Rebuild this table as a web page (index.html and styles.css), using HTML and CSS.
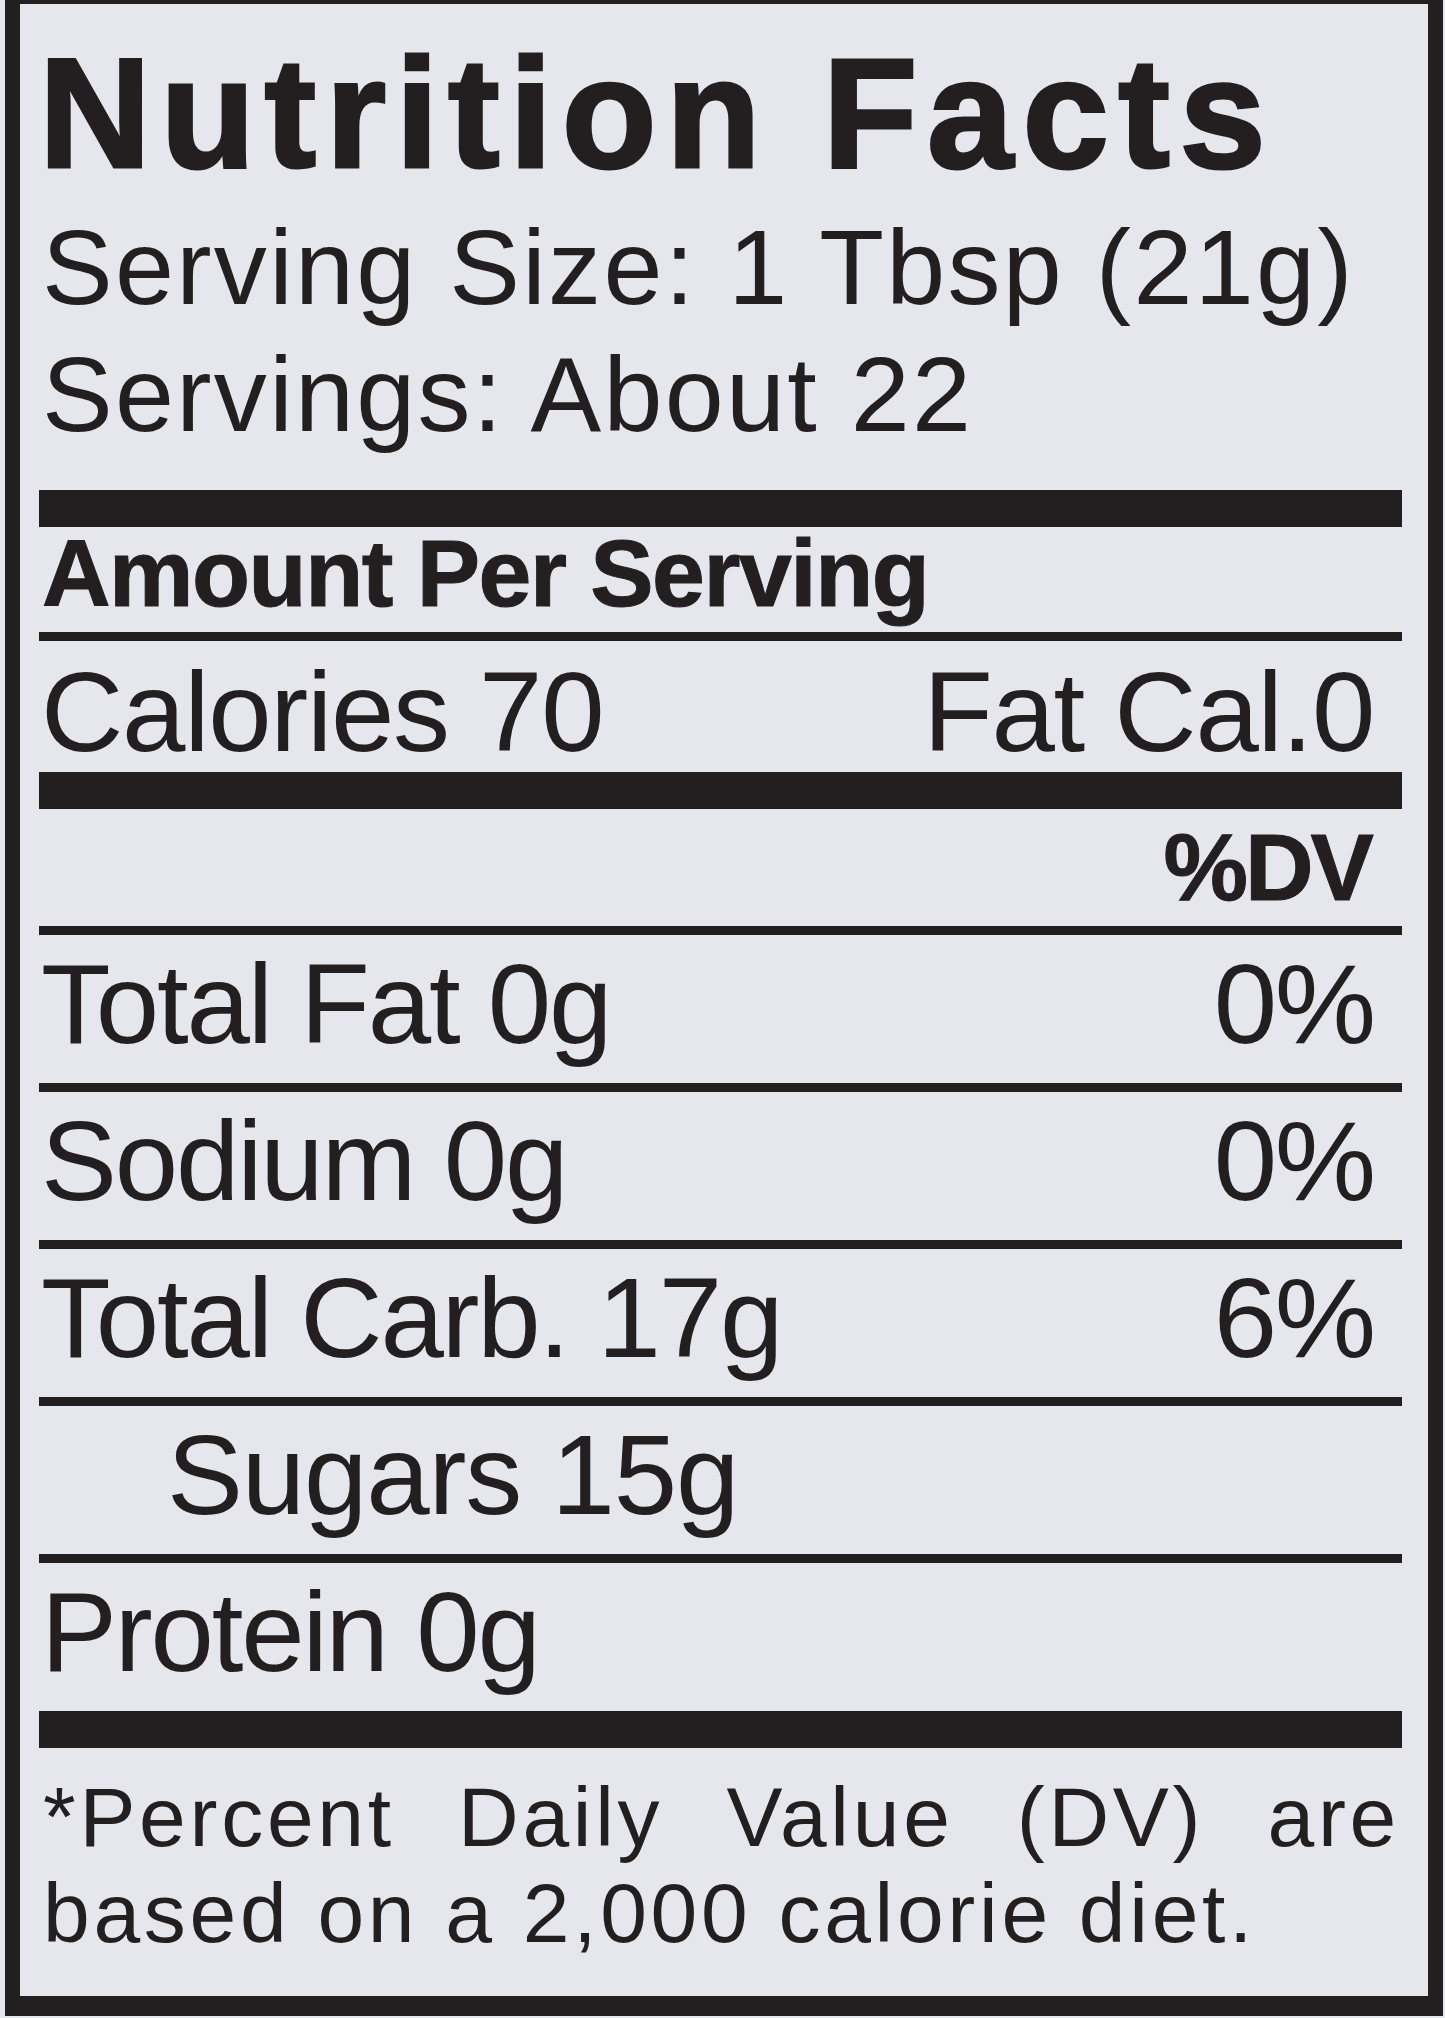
FILE: index.html
```html
<!DOCTYPE html>
<html lang="en">
<head>
<meta charset="utf-8">
<title>Nutrition Facts</title>
<link rel="stylesheet" href="styles.css">
</head>
<body>
<div class="label">
  <h1 class="title">Nutrition Facts</h1>
  <p class="serving">Serving Size: 1 Tbsp (21g)</p>
  <p class="serving">Servings: About 22</p>
  <div class="bar bar-thick bar-first"></div>
  <p class="amount">Amount Per Serving</p>
  <div class="bar bar-thin"></div>
  <div class="row row-cal"><span>Calories 70</span><span>Fat Cal.0</span></div>
  <div class="bar bar-thick"></div>
  <div class="dv-head">%DV</div>
  <div class="bar bar-thin"></div>
  <div class="row"><span>Total Fat 0g</span><span>0%</span></div>
  <div class="bar bar-thin"></div>
  <div class="row"><span>Sodium 0g</span><span>0%</span></div>
  <div class="bar bar-thin"></div>
  <div class="row"><span>Total Carb. 17g</span><span>6%</span></div>
  <div class="bar bar-thin"></div>
  <div class="row row-sub"><span>Sugars 15g</span></div>
  <div class="bar bar-thin"></div>
  <div class="row"><span>Protein 0g</span></div>
  <div class="bar bar-thick"></div>
  <div class="foot">
    <div class="foot-line foot-just">*Percent Daily Value (DV) are</div>
    <div class="foot-line">based on a 2,000 calorie diet.</div>
  </div>
</div>
</body>
</html>
```

FILE: styles.css
```css
html, body {
  margin: 0;
  padding: 0;
  background: #e5e7ed;
}

body {
  width: 1445px;
  height: 2018px;
  overflow: hidden;
  font-family: "Liberation Sans", Arial, Helvetica, sans-serif;
  color: #231f20;
}

.label {
  box-sizing: content-box;
  margin-left: 5px;
  width: 1363px;
  height: 1992px;
  padding: 0 26px 0 19px;
  border-left: 15px solid #231f20;
  border-right: 15px solid #231f20;
  border-top: 4px solid #231f20;
  border-bottom: 20px solid #231f20;
  background: #e5e7ed;
  overflow: hidden;
}

.title {
  margin: 0;
  padding-top: 20px;
  font-size: 155px;
  line-height: 180px;
  font-weight: 700;
  letter-spacing: 9.5px;
  -webkit-text-stroke: 3px #231f20;
  white-space: nowrap;
}

.serving {
  margin: 0;
  padding-left: 3px;
  font-size: 106px;
  line-height: 127px;
  letter-spacing: 2.3px;
  white-space: nowrap;
}

.bar {
  background: #231f20;
}

.bar-thick {
  height: 37px;
}

.bar-first {
  margin-top: 32px;
}

.bar-thin {
  height: 9px;
}

.amount {
  margin: 0;
  padding: 0 0 13px 3px;
  font-size: 95px;
  line-height: 92px;
  font-weight: 700;
  letter-spacing: -1.5px;
  -webkit-text-stroke: 1px #231f20;
  white-space: nowrap;
}

.row {
  display: flex;
  justify-content: space-between;
  padding: 0 28px 10px 2px;
  font-size: 114px;
  line-height: 138px;
  letter-spacing: -2.2px;
  white-space: nowrap;
}

.row-cal {
  padding-top: 11px;
  padding-bottom: 0;
  line-height: 120px;
  letter-spacing: -1.3px;
}

.row-sub {
  padding-left: 128px;
  letter-spacing: -1.2px;
}

.dv-head {
  padding-right: 31px;
  text-align: right;
  font-size: 95px;
  line-height: 117px;
  font-weight: 700;
  letter-spacing: -3px;
  -webkit-text-stroke: 1px #231f20;
}

.foot {
  padding: 21px 2px 0 4px;
  font-size: 84px;
  line-height: 96px;
  letter-spacing: 3.7px;
  white-space: nowrap;
}

.foot-just {
  text-align: justify;
  text-align-last: justify;
  white-space: normal;
}
```
